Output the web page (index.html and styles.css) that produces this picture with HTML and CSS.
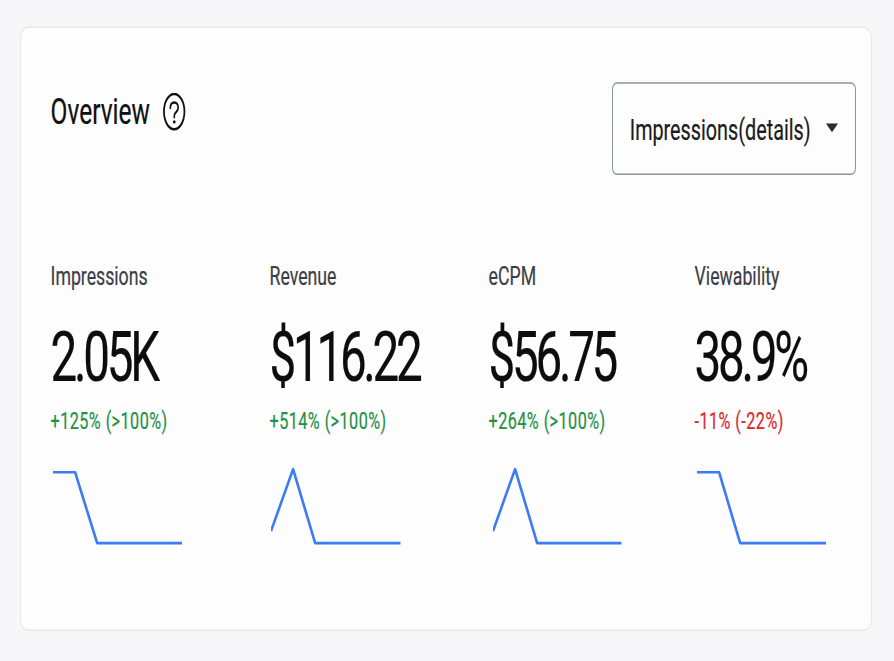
FILE: index.html
```html
<!DOCTYPE html>
<html lang="en">
<head>
<meta charset="utf-8">
<title>Overview</title>
<link rel="stylesheet" href="styles.css">
</head>
<body>
<div class="stage">
  <section class="card">
    <header class="card-header">
      <h1 class="title">Overview
        <svg class="help" width="22.4" height="25.8" viewBox="0 0 33 38" aria-hidden="true">
          <ellipse cx="16.5" cy="19" rx="15.1" ry="17.6" fill="none" stroke="#111" stroke-width="2.6"/>
          <path d="M10.8 15.4 C10.8 11.9 13.2 9.9 16.6 9.9 C20.1 9.9 22.4 12 22.4 15 C22.4 18 19.6 19.2 17.8 20.6 C16.9 21.3 16.6 22.2 16.6 24.6" fill="none" stroke="#111" stroke-width="2.4" stroke-linecap="round"/>
          <ellipse cx="16.6" cy="29.3" rx="2.1" ry="1.7" fill="#111"/>
        </svg>
      </h1>
      <button class="select" type="button">
        <span class="select-label">Impressions(details)</span>
        <span class="caret"></span>
      </button>
    </header>

    <div class="metrics">
      <div class="metric">
        <div class="metric-label">Impressions</div>
        <div class="metric-value">2.05K</div>
        <div class="metric-delta up">+125% (&gt;100%)</div>
        <svg class="spark" width="130.5" height="54.4" viewBox="0 0 130 80" preserveAspectRatio="none" aria-hidden="true">
          <polyline points="1,6 23,6 45,77 130,77" fill="none" stroke="#3a7cf6" stroke-width="2.6" stroke-linejoin="round"/>
        </svg>
      </div>
      <div class="metric">
        <div class="metric-label">Revenue</div>
        <div class="metric-value">$116.22</div>
        <div class="metric-delta up">+514% (&gt;100%)</div>
        <svg class="spark" width="130.5" height="54.4" viewBox="0 0 130 80" preserveAspectRatio="none" aria-hidden="true">
          <polyline points="0,65 22,3 44,77 129,77" fill="none" stroke="#3a7cf6" stroke-width="2.6" stroke-linejoin="round"/>
        </svg>
      </div>
      <div class="metric">
        <div class="metric-label">eCPM</div>
        <div class="metric-value">$56.75</div>
        <div class="metric-delta up">+264% (&gt;100%)</div>
        <svg class="spark shift" width="130.5" height="54.4" viewBox="0 0 130 80" preserveAspectRatio="none" aria-hidden="true">
          <polyline points="0,65 22,3 44,77 128,77" fill="none" stroke="#3a7cf6" stroke-width="2.6" stroke-linejoin="round"/>
        </svg>
      </div>
      <div class="metric">
        <div class="metric-label">Viewability</div>
        <div class="metric-value">38.9%</div>
        <div class="metric-delta down">-11% (-22%)</div>
        <svg class="spark" width="130.5" height="54.4" viewBox="0 0 130 80" preserveAspectRatio="none" aria-hidden="true">
          <polyline points="1,6 23,6 44,77 130,77" fill="none" stroke="#3a7cf6" stroke-width="2.6" stroke-linejoin="round"/>
        </svg>
      </div>
    </div>
  </section>
</div>
</body>
</html>
```

FILE: styles.css
```css
html, body {
  margin: 0;
  padding: 0;
  background: #f7f7f9;
  overflow: hidden;
}

body {
  width: 894px;
  height: 661px;
  font-family: Roboto, "Liberation Sans", Arial, sans-serif;
  color: #111;
  -webkit-text-stroke: 0.15px currentColor;
}

/* The reference is drawn vertically stretched (tall, narrow glyphs):
   the page is laid out at 68% height and stretched to the window. */
.stage {
  box-sizing: border-box;
  width: 894px;
  padding: 18.4px 22.4px 0 19.7px;
  transform: scaleY(1.4706);
  transform-origin: 0 0;
}

.card {
  background: #fdfdfe;
  border: 1px solid #e7e7ec;
  border-radius: 8px;
  padding: 36.7px 15px 56.4px 29.9px;
}

.card-header {
  display: flex;
  justify-content: space-between;
  align-items: flex-start;
}

.title {
  margin: 5.4px 0 0;
  display: flex;
  align-items: center;
  gap: 13.6px;
  font-size: 24.5px;
  line-height: 29.9px;
  font-weight: 400;
  color: #111;
}

.help {
  display: block;
  margin-top: -1.4px;
}

.select {
  box-sizing: border-box;
  height: 62.6px;
  display: flex;
  align-items: center;
  gap: 15px;
  padding: 0 17px 0 16.3px;
  border: 1px solid #8d929b;
  border-radius: 4.8px;
  background: #fdfdfe;
  font-family: inherit;
  font-size: 19.8px;
  color: #1b1b1b;
  cursor: pointer;
}

.select-label {
  line-height: 23.1px;
  margin-top: 2px;
}

.caret {
  width: 0;
  height: 0;
  border-left: 6.1px solid transparent;
  border-right: 6.1px solid transparent;
  border-top: 6.8px solid #2e2e2e;
}

.metrics {
  margin-top: 59.8px;
  display: grid;
  grid-template-columns: 219px 219px 206px 1fr;
}

.metric {
  display: flex;
  flex-direction: column;
  align-items: flex-start;
}

.metric-label {
  font-size: 17.7px;
  line-height: 21.8px;
  color: #3b3f45;
}

.metric-value {
  margin-top: 15.5px;
  font-size: 47.6px;
  line-height: 54.4px;
  letter-spacing: -3.3px;
  color: #0d0d0d;
}

.metric-delta {
  margin-top: 7.3px;
  font-size: 16.2px;
  line-height: 19px;
  letter-spacing: 0.45px;
}

.metric-delta.up {
  color: #1e9143;
}

.metric-delta.down {
  color: #e0262a;
}

.spark {
  display: block;
  margin-top: 20.7px;
  margin-left: 1.4px;
}

.spark.shift {
  margin-left: 4px;
}
```
